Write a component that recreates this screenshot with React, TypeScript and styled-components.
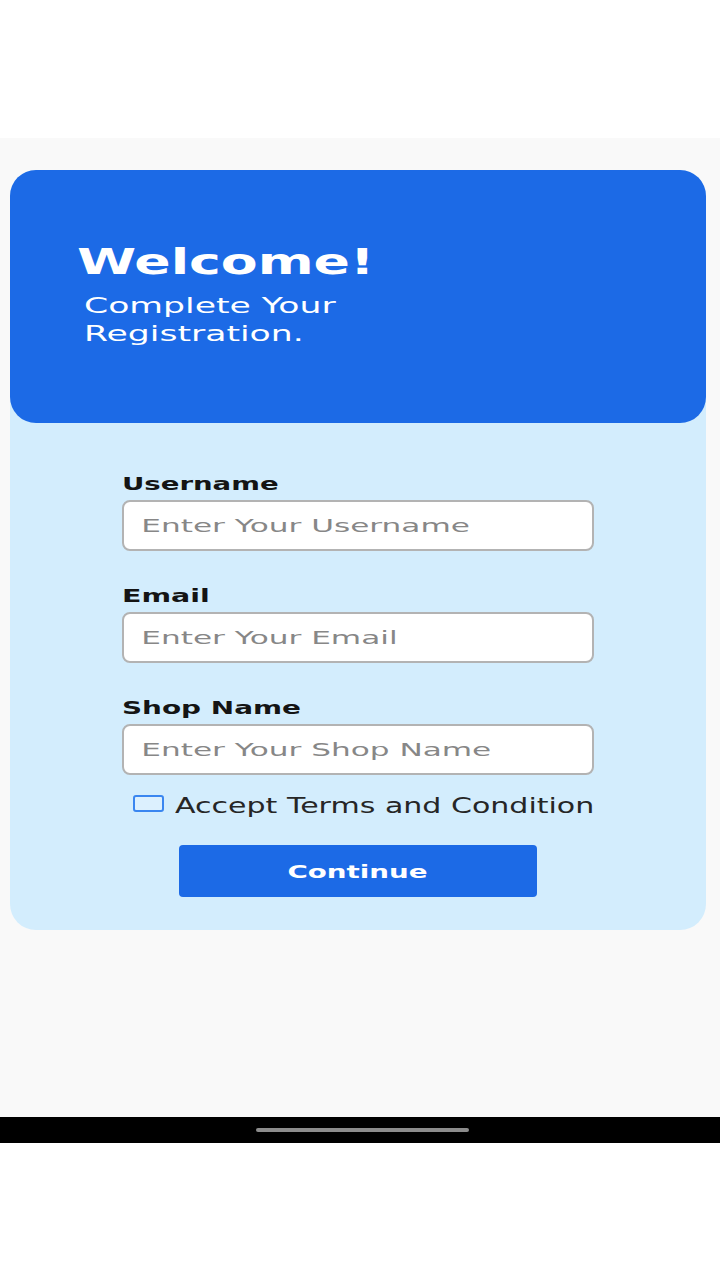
import React from "react";
import styled, { createGlobalStyle } from "styled-components";

const Global = createGlobalStyle`
  html, body { margin: 0; padding: 0; background: #ffffff; }
  body { font-family: "DejaVu Sans", "Noto Sans", sans-serif; }
  * { box-sizing: border-box; }
`;

const TopSpace = styled.div`
  height: 138px;
  background: #ffffff;
`;

const Screen = styled.div`
  height: 979px;
  background: #f9f9f9;
  padding: 32px 14px 0 10px;
`;

const Card = styled.div`
  background: #d3edfd;
  border-radius: 26px;
  padding-bottom: 33px;
`;

const Header = styled.div`
  height: 253px;
  background: #1c6ae6;
  border-radius: 26px;
  padding: 70px 0 0 67px;
  color: #ffffff;
`;

/* Wide text: the source face is much wider than any installed one */
const Wide = styled.span<{ $sx: number; $origin?: string }>`
  display: inline-block;
  transform: scaleX(${(p) => p.$sx});
  transform-origin: ${(p) => p.$origin ?? "left center"};
`;

const Title = styled.h1`
  margin: 0;
  font-size: 36px;
  line-height: 44px;
  font-weight: 700;
`;

const Subtitle = styled.p`
  margin: 8px 0 0 7px;
  font-size: 21.5px;
  line-height: 28px;
  width: 200px;
`;

const Form = styled.form`
  width: 472px;
  margin: 0 auto;
  padding-top: 50px;
  display: flex;
  flex-direction: column;
`;

const Field = styled.div<{ $first?: boolean }>`
  display: flex;
  flex-direction: column;
  gap: 5px;
  margin-top: ${(p) => (p.$first ? "0" : "34px")};
`;

const Label = styled.label`
  font-size: 18px;
  line-height: 22px;
  font-weight: 700;
  color: #141414;
`;

const InputBox = styled.div`
  height: 51px;
  border: 2px solid #b3b3b3;
  border-radius: 8px;
  background: #ffffff;
  overflow: hidden;
  display: flex;
  align-items: center;
`;

const Input = styled.input<{ $sx: number }>`
  width: calc(100% / ${(p) => p.$sx});
  height: 100%;
  transform: scaleX(${(p) => p.$sx});
  transform-origin: left center;
  border: none;
  background: transparent;
  padding: 0 0 0 10px;
  font-family: "DejaVu Sans", sans-serif;
  font-size: 18px;
  color: #333;
  outline: none;
  &::placeholder { color: #878787; }
`;

const CheckRow = styled.label`
  display: flex;
  align-items: flex-start;
  gap: 11px;
  margin: 19px 0 0 11px;
  font-size: 20.5px;
  line-height: 24px;
  color: #262626;
  white-space: nowrap;
`;

const Box = styled.span`
  width: 31px;
  height: 17px;
  margin-top: 1px;
  border: 2px solid #3a86f0;
  border-radius: 3px;
  background: #dcf0fe;
  flex-shrink: 0;
`;

const Button = styled.button`
  align-self: center;
  margin-top: 27px;
  width: 358px;
  height: 52px;
  border: none;
  border-radius: 4px;
  background: #1c6ae6;
  color: #ffffff;
  font-family: "DejaVu Sans", sans-serif;
  font-size: 18px;
  font-weight: 700;
  padding: 0;
  display: flex;
  align-items: center;
  justify-content: center;
`;

const NavBar = styled.div`
  height: 26px;
  background: #000000;
  display: flex;
  align-items: center;
  justify-content: center;
`;

const Handle = styled.div`
  width: 213px;
  height: 4px;
  border-radius: 2px;
  background: #8c8c8c;
  margin-left: 4px;
`;

export default function App() {
  return (
    <>
      <Global />
      <TopSpace />
      <Screen>
        <Card>
          <Header>
            <Title>
              <Wide $sx={1.49}>Welcome!</Wide>
            </Title>
            <Subtitle>
              <Wide $sx={1.61}>Complete Your</Wide>
              <br />
              <Wide $sx={1.61}>Registration.</Wide>
            </Subtitle>
          </Header>
          <Form onSubmit={(e) => e.preventDefault()}>
            <Field $first>
              <Label>
                <Wide $sx={1.53}>Username</Wide>
              </Label>
              <InputBox>
                <Input $sx={1.73} placeholder="Enter Your Username" />
              </InputBox>
            </Field>
            <Field>
              <Label>
                <Wide $sx={1.58}>Email</Wide>
              </Label>
              <InputBox>
                <Input $sx={1.73} placeholder="Enter Your Email" />
              </InputBox>
            </Field>
            <Field>
              <Label>
                <Wide $sx={1.55}>Shop Name</Wide>
              </Label>
              <InputBox>
                <Input $sx={1.73} placeholder="Enter Your Shop Name" />
              </InputBox>
            </Field>
            <CheckRow>
              <Box />
              <Wide $sx={1.465}>Accept Terms and Condition</Wide>
            </CheckRow>
            <Button type="submit">
              <Wide $sx={1.54} $origin="center">Continue</Wide>
            </Button>
          </Form>
        </Card>
      </Screen>
      <NavBar>
        <Handle />
      </NavBar>
    </>
  );
}
